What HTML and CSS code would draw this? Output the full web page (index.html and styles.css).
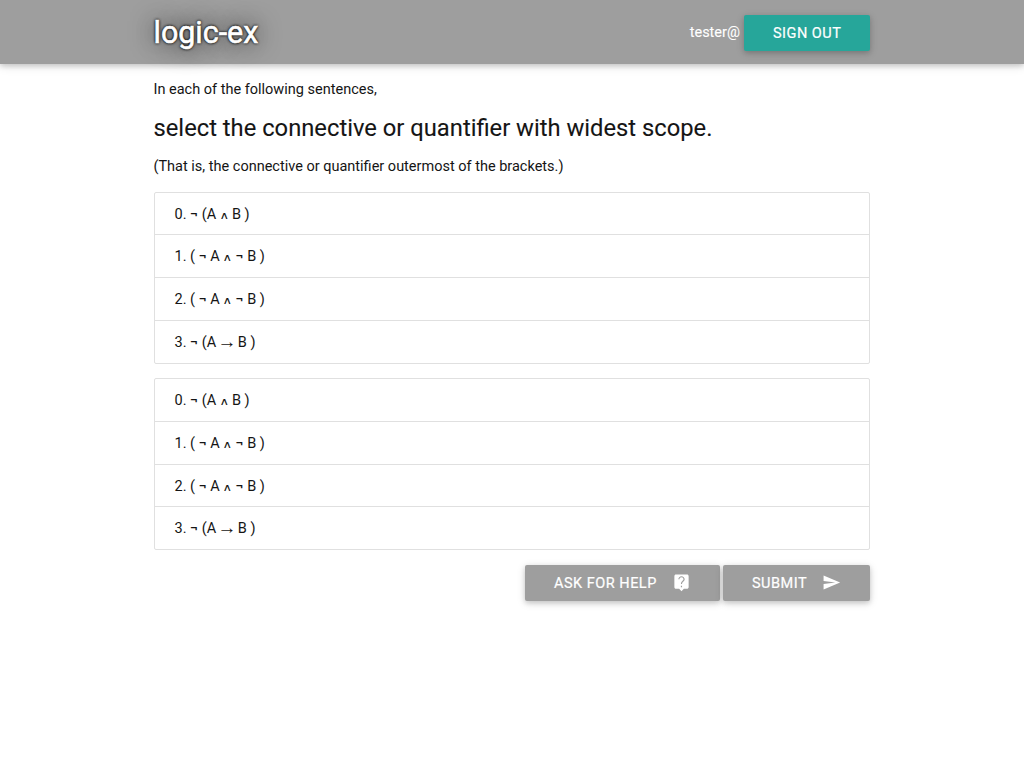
FILE: index.html
```html
<!DOCTYPE html>
<html lang="en">
<head>
<meta charset="utf-8">
<title>logic-ex</title>
<link rel="stylesheet" href="styles.css">
</head>
<body>
<nav class="nav">
  <div class="container nav-row">
    <a class="logo">logic-ex</a>
    <div class="account"><span class="user">tester@</span><a class="btn btn-teal">Sign out</a></div>
  </div>
</nav>
<main class="container main">
  <p class="intro">In each of the following sentences,</p>
  <h1 class="title">select the connective or quantifier with widest scope.</h1>
  <p class="note">(That is, the connective or quantifier outermost of the brackets.)</p>
  <ol class="collection">
    <li class="item">0. ¬ (A <span class="and">∧</span> B )</li>
    <li class="item">1. ( ¬ A <span class="and">∧</span> ¬ B )</li>
    <li class="item">2. ( ¬ A <span class="and">∧</span> ¬ B )</li>
    <li class="item">3. ¬ (A<span class="arrow">→</span>B )</li>
  </ol>
  <ol class="collection">
    <li class="item">0. ¬ (A <span class="and">∧</span> B )</li>
    <li class="item">1. ( ¬ A <span class="and">∧</span> ¬ B )</li>
    <li class="item">2. ( ¬ A <span class="and">∧</span> ¬ B )</li>
    <li class="item">3. ¬ (A<span class="arrow">→</span>B )</li>
  </ol>
  <div class="actions">
    <a class="btn btn-help">Ask for help<svg class="icon" viewBox="0 0 24 24"><path d="M19 2H5c-1.100 0-2 .9-2 2v14c0 1.100.9 2 2 2h4l3 3 3-3h4c1.100 0 2-.9 2-2V4c0-1.100-.9-2-2-2zm-6.300 16h-1.500v-2h1.500v2zm2.370-7.750l-.9.920C13.200 12.150 12.700 12.600 12.700 14h-1.400v-.5c0-1.400.5-2.200 1.500-3.200l1-1c.4-.4.700-.9.700-1.500C14.500 6.400 13.500 5.400 12 5.400S9.400 6.500 9.400 8H8c0-2.210 1.790-4 4-4s4 1.790 4 4c0 .880-.360 1.680-.930 2.250z"/></svg></a>
    <a class="btn btn-submit">Submit<svg class="icon" viewBox="0 0 24 24"><path d="M2.010 21L23 12 2.010 3 2 10l15 2-15 2z"/></svg></a>
  </div>
</main>
</body>
</html>
```

FILE: styles.css
```css
* { box-sizing: border-box; }
body { margin: 0; background: #fff; color: #151515; font: 14.5px/21.75px Roboto, sans-serif; }
.container { width: 716px; margin: 0 auto; }
.main { padding-bottom: 30px; }
.nav { height: 64px; background: #9e9e9e; color: #fff; box-shadow: 0 2px 5px 0 rgba(0,0,0,.16), 0 2px 10px 0 rgba(0,0,0,.12); }
.nav-row { height: 64px; display: flex; justify-content: space-between; align-items: center; }
.logo { margin-left: -.5px; padding-top: 1px; font-size: 30.45px; line-height: 64px; text-shadow: 0 0 3px #000, 0 0 3px #000, 0 0 24px #000; -webkit-text-stroke: .6px; }
.account { display: flex; align-items: center; gap: 4px; }
.user { padding-top: 2px; -webkit-text-stroke: .1px; }
.btn { display: flex; align-items: center; height: 36px; padding: 1px 29px 0; border-radius: 2px; color: #fff; font-size: 14.5px; letter-spacing: .5px; text-transform: uppercase; white-space: nowrap; box-shadow: 0 2px 5px 0 rgba(0,0,0,.16), 0 2px 10px 0 rgba(0,0,0,.12); -webkit-text-stroke: .2px; }
.btn-teal { width: 126px; padding-right: 0; margin-top: 2px; background: #26a69a; }
.intro { margin: 15px 0 0 -.5px; }
.title { margin: 12px 0 13px -.5px; font-size: 23.76px; line-height: 30px; font-weight: 400; -webkit-text-stroke: .1px; }
.note { margin: 0 0 -.4px -.5px; }
.collection { list-style: none; margin: 14.5px 0; padding: 0; border: 1px solid #e0e0e0; border-radius: 2px; }
.item { height: 42.75px; padding: 11.1px 20px 8px 19.5px; border-bottom: 1px solid #e0e0e0; }
.item:last-child { height: 41.75px; border-bottom: 0; }
.and { display: inline-block; width: 8.6px; font: 10.5px/1 "DejaVu Sans", sans-serif; transform: translateX(.5px) scaleX(1.25); }
.arrow { display: inline-block; margin: 0 1.35px; font: 19px/14px "Liberation Serif", serif; transform: translateY(.5px); }
.actions { display: flex; justify-content: flex-end; gap: 3px; }
.btn-help, .btn-submit { padding-top: 2px; background: #9e9e9e; }
.btn-help { width: 195px; }
.btn-submit { width: 147px; }
.icon { width: 19px; height: 19px; margin: -2px 0 0 15px; fill: #fff; }
```
